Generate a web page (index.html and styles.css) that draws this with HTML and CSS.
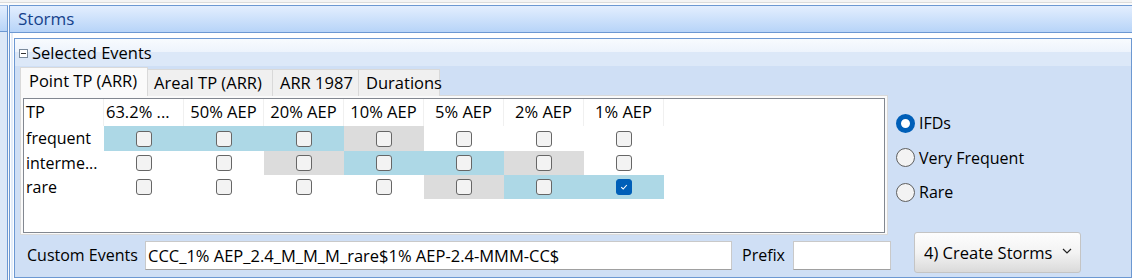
FILE: index.html
```html
<!DOCTYPE html>
<html>
<head>
<meta charset="utf-8">
<link rel="stylesheet" href="styles.css">
</head>
<body>
<div class="app">
  <div class="leftstrip"><div class="leftstrip-head"></div></div>
  <div class="storms">
    <div class="storms-header">Storms</div>
    <div class="storms-body">
      <div class="panel">
        <div class="panel-head">
          <span class="collapse"><span class="minus"></span></span>
          <span class="panel-title">Selected Events</span>
        </div>
        <div class="panel-body">
          <div class="leftcol">
            <div class="tabs">
              <div class="tab active t1">Point TP (ARR)</div>
              <div class="tab t2">Areal TP (ARR)</div>
              <div class="tab t3">ARR 1987</div>
              <div class="tab t4">Durations</div>
            </div>
            <div class="tabpage">
              <div class="grid">
                <div class="hc hc-left">TP</div>
                <div class="hc hc-left">63.2% ...</div>
                <div class="hc">50% AEP</div>
                <div class="hc">20% AEP</div>
                <div class="hc">10% AEP</div>
                <div class="hc">5% AEP</div>
                <div class="hc">2% AEP</div>
                <div class="hc">1% AEP</div>
                <div class="fill"></div>

                <div class="rl">frequent</div>
                <div class="c b"><span class="cb"></span></div>
                <div class="c b"><span class="cb"></span></div>
                <div class="c b"><span class="cb"></span></div>
                <div class="c g"><span class="cb"></span></div>
                <div class="c"><span class="cb"></span></div>
                <div class="c"><span class="cb"></span></div>
                <div class="c"><span class="cb"></span></div>
                <div class="fill"></div>

                <div class="rl">interme...</div>
                <div class="c"><span class="cb"></span></div>
                <div class="c"><span class="cb"></span></div>
                <div class="c g"><span class="cb"></span></div>
                <div class="c b"><span class="cb"></span></div>
                <div class="c b"><span class="cb"></span></div>
                <div class="c g"><span class="cb"></span></div>
                <div class="c"><span class="cb"></span></div>
                <div class="fill"></div>

                <div class="rl">rare</div>
                <div class="c"><span class="cb"></span></div>
                <div class="c"><span class="cb"></span></div>
                <div class="c"><span class="cb"></span></div>
                <div class="c"><span class="cb"></span></div>
                <div class="c g"><span class="cb"></span></div>
                <div class="c b"><span class="cb"></span></div>
                <div class="c b"><span class="cb checked"><svg width="10" height="10" viewBox="0 0 10 10"><path d="M2.2 5.2 L4.2 7 L7.8 3" fill="none" stroke="#fff" stroke-width="1.1"/></svg></span></div>
                <div class="fill"></div>
              </div>
            </div>
            <div class="bottomrow">
              <span class="lbl custom-lbl">Custom Events</span>
              <div class="input custom">CCC_1% AEP_2.4_M_M_M_rare$1% AEP-2.4-MMM-CC$</div>
              <span class="lbl prefix-lbl">Prefix</span>
              <div class="input prefix"></div>
            </div>
          </div>
          <div class="rightcol">
            <div class="radios">
              <div class="radio-row"><span class="radio on"></span><span>IFDs</span></div>
              <div class="radio-row"><span class="radio"></span><span>Very Frequent</span></div>
              <div class="radio-row"><span class="radio"></span><span>Rare</span></div>
            </div>
            <div class="button"><span>4) Create Storms</span><svg class="chev" width="10" height="6" viewBox="0 0 10 6"><path d="M1 1 L5 5 L9 1" fill="none" stroke="#222" stroke-width="1.2"/></svg></div>
          </div>
        </div>
      </div>
    </div>
  </div>
</div>
</body>
</html>
```

FILE: styles.css
```css
* { box-sizing: border-box; }
html, body { margin: 0; padding: 0; }
body {
  width: 1132px;
  height: 280px;
  overflow: hidden;
  background: linear-gradient(#f4f4f4 0, #f4f4f4 2px, #dcdcdc 2px, #dcdcdc 3px, #fbfbfb 3px);
  font-family: "Open Sans", "Noto Sans", sans-serif;
  font-size: 16px;
  color: #000;
}
.app {
  display: flex;
  height: 280px;
  padding-top: 5px;
}
.leftstrip {
  width: 8px;
  flex: none;
  background: #dce8f7;
  border-right: 1px solid #6c98d2;
  border-top: 1px solid #9fbde6;
}
.leftstrip-head {
  height: 26px;
  background: linear-gradient(#e3eefe, #b7d4f8);
  border-bottom: 1px solid #6c98d2;
}
.storms {
  flex: 1;
  margin-left: 1px;
  border-left: 1px solid #6c98d2;
  border-top: 1px solid #6c98d2;
  background: #fff;
  display: flex;
  flex-direction: column;
  min-width: 0;
}
.storms-header {
  height: 27px;
  flex: none;
  background: linear-gradient(#e3eefe, #b7d4f8);
  border-bottom: 1px solid #6c98d2;
  color: #15428b;
  font-size: 17px;
  line-height: 26px;
  padding-left: 8px;
}
.storms-body {
  flex: 1;
  padding: 5px 0 0 4px;
  background: linear-gradient(90deg, #fff 0, #fff 1px, #e4edf9 1px, #e4edf9 3px, #fff 3px);
}
.panel {
  width: 1118px;
  height: 240px;
  border: 1px solid #6c98d2;
  background: #cfdff5;
  display: flex;
  flex-direction: column;
}
.panel-head {
  height: 27px;
  flex: none;
  background: linear-gradient(#f8fbfe 0, #edf3fc 50%, #dce8f8 50%, #dce8f8 100%);
  display: flex;
  align-items: center;
  padding-left: 4px;
}
.collapse {
  width: 9px;
  height: 9px;
  border: 1px solid #7a8a9c;
  background: #fff;
  display: flex;
  align-items: center;
  justify-content: center;
  margin-right: 4px;
  margin-top: 1px;
}
.minus { width: 5px; height: 1px; background: #333; }
.panel-title { line-height: 20px; font-size: 16.5px; }
.panel-body {
  flex: 1;
  display: flex;
  padding-left: 5px;
}
.leftcol {
  width: 872px;
  flex: none;
  display: flex;
  flex-direction: column;
}
.tabs {
  height: 29px;
  margin-top: 1px;
  display: flex;
  align-items: flex-end;
  position: relative;
  z-index: 1;
}
.tab {
  height: 27px;
  background: #f0f0f0;
  border: 1px solid #d9d9d9;
  border-bottom: none;
  border-left: none;
  padding: 0 0 0 7px;
  line-height: 26px;
  white-space: nowrap;
  font-size: 16.5px;
}
.tab.active {
  height: 29px;
  background: #fafafa;
  border-left: 1px solid #d9d9d9;
  padding-left: 8px;
  line-height: 26px;
}
.t1 { width: 128px; }
.t2 { width: 125px; padding-left: 6px; }
.t3 { width: 86px; }
.t4 { width: 81px; }
.tabpage {
  width: 868px;
  height: 140px;
  margin-top: -1px;
  background: #fafafa;
  border: 1px solid #d9d9d9;
  padding: 2px 2px 0 2px;
}
.grid {
  width: 862px;
  height: 135px;
  border: 1px solid #828790;
  background: #fff;
  display: grid;
  grid-template-columns: repeat(8, 80px) 1fr;
  grid-template-rows: 27px 25px 24px 24px;
  align-content: start;
}
.hc {
  border-right: 1px solid #f0f0f0;
  text-align: center;
  line-height: 26px;
  white-space: nowrap;
  overflow: hidden;
  font-size: 16.5px;
}
.hc-left { text-align: left; padding-left: 2px; }
.rl {
  padding-left: 2px;
  line-height: 24px;
  white-space: nowrap;
}
.c {
  display: flex;
  align-items: center;
  justify-content: center;
}
.c.b { background: #add8e6; }
.c.g { background: #dcdcdc; }
.cb {
  width: 16px;
  height: 16px;
  border: 1px solid #666;
  border-radius: 3px;
  background: #f3f3f3;
  display: flex;
  align-items: center;
  justify-content: center;
}
.cb.checked {
  background: #005fb8;
  border-color: #005fb8;
}
.bottomrow {
  flex: 1;
  display: flex;
  align-items: center;
  padding-left: 7px;
  padding-bottom: 2px;
}
.lbl { white-space: nowrap; }
.custom-lbl { width: 118px; flex: none; }
.input {
  height: 29px;
  flex: none;
  background: #fff;
  border: 1px solid #c9c9c9;
  border-bottom-color: #a0a0a0;
  line-height: 27px;
  padding-left: 2px;
  white-space: nowrap;
  overflow: hidden;
}
.custom { width: 587px; font-size: 16.5px; }
.prefix-lbl { margin-left: 10px; width: 51px; flex: none; }
.prefix { width: 98px; }
.rightcol {
  flex: 1;
  display: flex;
  flex-direction: column;
  padding-left: 4px;
}
.radios {
  padding-top: 40px;
  display: flex;
  flex-direction: column;
}
.radio-row {
  height: 34.5px;
  display: flex;
  align-items: center;
  gap: 4px;
}
.radio {
  width: 19px;
  height: 19px;
  border-radius: 50%;
  border: 1px solid #5f5f5f;
  background: #f3f3f3;
  flex: none;
}
.radio.on {
  border: 5.5px solid #005fb8;
  background: #fff;
}
.button {
  margin-top: auto;
  margin-bottom: 4px;
  margin-left: 18px;
  width: 167px;
  height: 41px;
  border: 1px solid #c4c4c4;
  border-radius: 3px;
  background: linear-gradient(#fdfdfd 0%, #f3f3f3 50%, #dadada 100%);
  display: flex;
  align-items: center;
  padding-left: 9px;
  padding-right: 8px;
  justify-content: space-between;
  font-size: 16.5px;
}
.chev { margin-top: -4px; }
```
